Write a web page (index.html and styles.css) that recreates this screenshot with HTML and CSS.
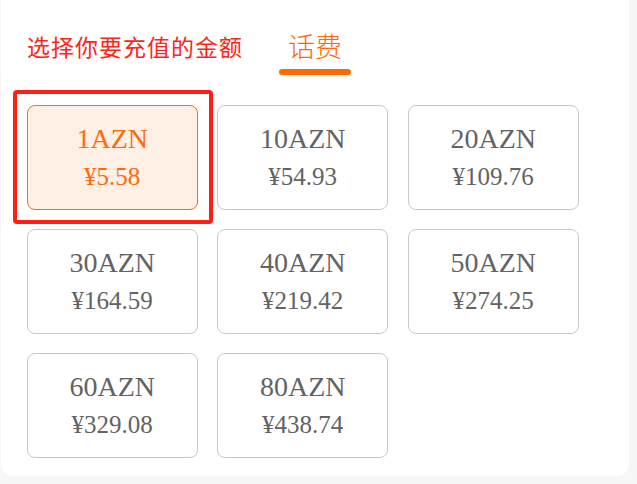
FILE: index.html
```html
<!DOCTYPE html>
<html lang="zh-CN">
<head>
<meta charset="utf-8">
<title>话费充值</title>
<link rel="stylesheet" href="styles.css">
</head>
<body>
<div class="card">
  <div class="header">
    <div class="title">选择你要充值的金额</div>
    <div class="tab">
      <div class="tab-text">话费</div>
      <div class="tab-bar"></div>
    </div>
  </div>
  <div class="grid">
    <div class="item selected">
      <div class="name">1AZN</div>
      <div class="price">¥5.58</div>
      <div class="highlight"></div>
    </div>
    <div class="item"><div class="name">10AZN</div><div class="price">¥54.93</div></div>
    <div class="item"><div class="name">20AZN</div><div class="price">¥109.76</div></div>
    <div class="item"><div class="name">30AZN</div><div class="price">¥164.59</div></div>
    <div class="item"><div class="name">40AZN</div><div class="price">¥219.42</div></div>
    <div class="item"><div class="name">50AZN</div><div class="price">¥274.25</div></div>
    <div class="item"><div class="name">60AZN</div><div class="price">¥329.08</div></div>
    <div class="item"><div class="name">80AZN</div><div class="price">¥438.74</div></div>
  </div>
</div>
</body>
</html>
```
FILE: styles.css
```css
html, body {
  margin: 0;
  padding: 0;
  background: #f7f7f7;
}
body {
  width: 637px;
  height: 484px;
  overflow: hidden;
}
.card {
  margin-left: 1px;
  width: 628px;
  height: 476px;
  box-sizing: border-box;
  background: #ffffff;
  border-radius: 0 0 12px 12px;
  padding-top: 32px;
}
.header {
  display: flex;
  align-items: flex-start;
  padding-left: 26px;
}
.title {
  font-family: "Noto Sans CJK SC", sans-serif;
  font-size: 23px;
  font-weight: 400;
  line-height: 28px;
  letter-spacing: 1px;
  color: #ff2418;
}
.tab {
  margin-left: 36px;
  width: 72px;
  display: flex;
  flex-direction: column;
  align-items: center;
}
.tab-text {
  font-family: "Noto Sans CJK SC", sans-serif;
  font-size: 27px;
  font-weight: 300;
  line-height: 28px;
  color: #ff6a00;
}
.tab-bar {
  margin-top: 9px;
  width: 72px;
  height: 6px;
  border-radius: 3px;
  background: #ff6a00;
}
.grid {
  margin-top: 30px;
  padding-left: 25.7px;
  display: grid;
  grid-template-columns: repeat(3, 171px);
  grid-auto-rows: 105px;
  column-gap: 19.5px;
  row-gap: 19px;
}
.item {
  position: relative;
  box-sizing: border-box;
  border: 1px solid #c9c9c9;
  border-radius: 8px;
  display: flex;
  flex-direction: column;
  align-items: center;
  justify-content: center;
  padding-top: 1px;
  font-family: "Liberation Serif", "Times New Roman", serif;
  color: #636363;
}
.name {
  font-size: 28px;
  line-height: 38px;
}
.price {
  font-size: 25px;
  line-height: 38px;
}
.item.selected {
  background: #fff0e6;
  border-color: #ff6c0a;
  color: #ff6a0e;
}
.highlight {
  position: absolute;
  top: -16px;
  left: -15px;
  right: -16px;
  bottom: -15px;
  border: 4px solid #ff1e12;
  border-radius: 4px;
  pointer-events: none;
}
```
